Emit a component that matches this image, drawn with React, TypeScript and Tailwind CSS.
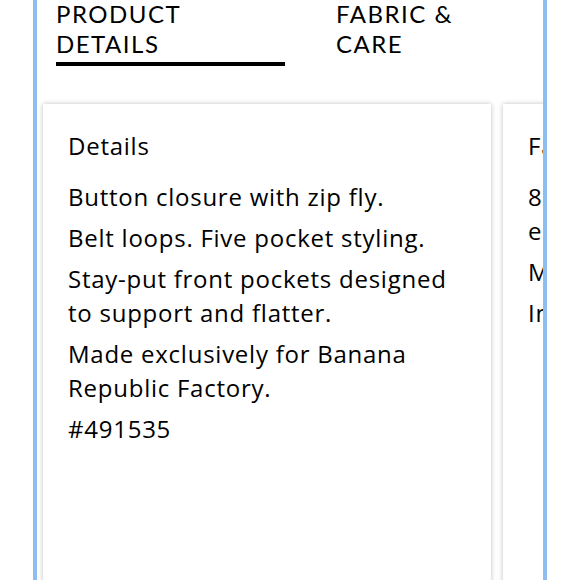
import React from "react";

const body = { fontFamily: "'Open Sans', Lato, sans-serif" };

export default function App() {
  return (
    <div className="w-[580px] h-[580px] bg-white overflow-hidden" style={{ fontFamily: "Lato, 'Open Sans', sans-serif" }}>
      <div className="ml-[33px] w-[514px] h-[580px] border-x-4 border-[#8fbdf0] overflow-hidden">
        <div className="flex pl-[19px] gap-[51px] h-[104px]">
          <div className="w-[229px] flex flex-col">
            <div className="text-[24px] leading-[30px] tracking-[1.5px] text-black -mt-[1px]">PRODUCT<br />DETAILS</div>
            <div className="mt-[3px] h-[4px] bg-black" />
          </div>
          <div className="w-[200px] text-[24px] leading-[30px] tracking-[1.5px] text-black -mt-[1px]">FABRIC &amp;<br />CARE</div>
        </div>
        <div className="flex gap-[12px] pl-[6px]" style={body}>
          <div className="shrink-0 w-[448px] h-[520px] bg-white shadow-[0_0_5px_rgba(0,0,0,0.25)] pl-[25px] pt-[25px] text-black text-[24px] leading-[34px] tracking-[0.75px]">
            <div className="mb-[17px]">Details</div>
            <p className="mb-[7px]">Button closure with zip fly.</p>
            <p className="mb-[7px]">Belt loops. Five pocket styling.</p>
            <p className="mb-[7px]">Stay-put front pockets designed<br />to support and flatter.</p>
            <p className="mb-[7px]">Made exclusively for Banana<br />Republic Factory.</p>
            <p>#491535</p>
          </div>
          <div className="shrink-0 w-[448px] h-[520px] bg-white shadow-[0_0_5px_rgba(0,0,0,0.25)] pl-[25px] pt-[25px] text-black text-[24px] leading-[34px] tracking-[0.75px]">
            <div className="mb-[17px]">Fabric &amp; Care</div>
            <p className="mb-[7px]">83% cotton, 15% polyester,<br />elastane.</p>
            <p className="mb-[7px]">Machine wash.</p>
            <p>Imported.</p>
          </div>
        </div>
      </div>
    </div>
  );
}
